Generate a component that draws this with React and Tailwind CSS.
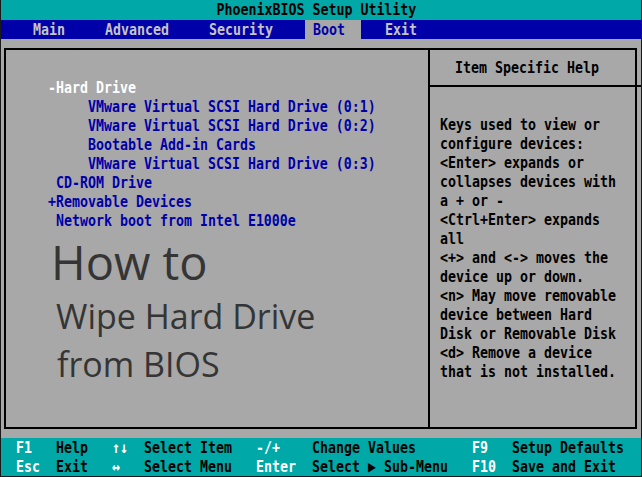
import React from 'react';

const mainItems = [
  { text: '-Hard Drive', white: true },
  { text: '     VMware Virtual SCSI Hard Drive (0:1)' },
  { text: '     VMware Virtual SCSI Hard Drive (0:2)' },
  { text: '     Bootable Add-in Cards' },
  { text: '     VMware Virtual SCSI Hard Drive (0:3)' },
  { text: ' CD-ROM Drive' },
  { text: '+Removable Devices' },
  { text: ' Network boot from Intel E1000e' },
];

const helpLines = [
  'Keys used to view or',
  'configure devices:',
  '<Enter> expands or',
  'collapses devices with',
  'a + or -',
  '<Ctrl+Enter> expands',
  'all',
  '<+> and <-> moves the',
  'device up or down.',
  '<n> May move removable',
  'device between Hard',
  'Disk or Removable Disk',
  '<d> Remove a device',
  'that is not installed.',
];

const footerRows = [
  ['F1', 'Help', '↑↓', 'Select Item', '-/+', 'Change Values', 'F9', 'Setup Defaults'],
  ['Esc', 'Exit', '↔', 'Select Menu', 'Enter', 'Select ▶ Sub-Menu', 'F10', 'Save and Exit'],
];

// bitmap-ish BIOS text: 16px glyphs squeezed into 8px cells
function Txt({ children, className = '' }) {
  return (
    <div className={`h-[19px] leading-[19px] whitespace-pre origin-left scale-x-[0.83] ${className}`}>
      {children}
    </div>
  );
}

export default function App() {
  return (
    <div className="w-[642px] h-[477px] bg-[#a8a8a8] border-x border-b border-[#1a1a1a] flex flex-col overflow-hidden font-['DejaVu_Sans_Mono','Liberation_Mono',monospace] text-[16px] font-bold">
      {/* title */}
      <div className="h-[20px] bg-[#00a8a8] flex justify-center items-center pr-[10px] text-black">
        <div className="h-[20px] leading-[20px] whitespace-pre scale-x-[0.83]">PhoenixBIOS Setup Utility</div>
      </div>

      {/* menu bar */}
      <div className="h-[19px] bg-[#0000a8] flex text-[#c4c4c4]">
        <div className="w-[32px]" />
        <div className="w-[72px]"><Txt>Main</Txt></div>
        <div className="w-[104px]"><Txt>Advanced</Txt></div>
        <div className="w-[96px]"><Txt>Security</Txt></div>
        <div className="w-[56px] pl-[8px] bg-[#a8a8a8] text-[#0000a8]"><Txt>Boot</Txt></div>
        <div className="w-[24px]" />
        <div className="w-[48px]"><Txt>Exit</Txt></div>
      </div>

      {/* main box */}
      <div className="ml-[3px] mr-[4px] mt-[9px] h-[381px] border-2 border-black flex">
        <div className="w-[424px] border-r-2 border-black pl-[42px] pt-[28px]">
          {mainItems.map((it, i) => (
            <Txt key={i} className={it.white ? 'text-white' : 'text-[#0000a8]'}>{it.text}</Txt>
          ))}

          <div className="-ml-[42px] font-['Open_Sans',sans-serif] font-medium text-[#353535]">
            <div className="mt-[5px] pl-[45px] text-[47px] leading-[54px]">How to</div>
            <div className="mt-[4px] pl-[50px] text-[34px] leading-[46px]">Wipe Hard Drive</div>
            <div className="mt-[2px] pl-[51px] text-[34px] leading-[46px]">from BIOS</div>
          </div>
        </div>

        <div className="flex-1 flex flex-col text-black">
          <div className="h-[37px] border-b-2 border-black flex items-center pl-[25px]">
            <Txt>Item Specific Help</Txt>
          </div>
          <div className="pt-[28px] pl-[10px]">
            {helpLines.map((l, i) => (
              <Txt key={i}>{l}</Txt>
            ))}
          </div>
        </div>
      </div>

      {/* footer */}
      <div className="mt-[9px] h-[38px] bg-[#00a8a8] pl-[15px]">
        {footerRows.map((row, r) => (
          <div key={r} className="grid grid-cols-[40px_56px_32px_112px_56px_160px_40px_1fr] h-[19px]">
            {row.map((c, i) => (
              <Txt key={i} className={i % 2 === 0 ? 'text-white' : 'text-black'}>{c}</Txt>
            ))}
          </div>
        ))}
      </div>
    </div>
  );
}
